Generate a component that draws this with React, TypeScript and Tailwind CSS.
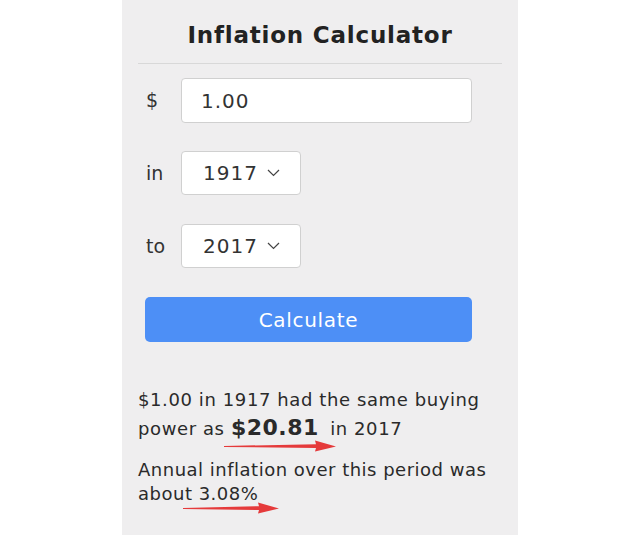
import React from 'react';

function Chevron() {
    return (
        <svg width="13" height="8" viewBox="0 0 13 8" className="ml-[9px]">
            <path d="M1 1 L6.5 6.5 L12 1" fill="none" stroke="#444" strokeWidth="1.2" />
        </svg>
    );
}

function YearSelect({ year }: { year: string }) {
    return (
        <div className="w-[120px] h-[44px] bg-white border border-[#d0d0d0] rounded-[4px] flex items-center pl-[21px] text-[20px] tracking-[1px] text-[#333]">
            {year}
            <Chevron />
        </div>
    );
}

function Arrow({ width, className }: { width: number; className: string }) {
    const s = width - 20;
    return (
        <svg width={width} height="14" viewBox={`0 0 ${width} 14`} className={className}>
            <path
                d={`M0 7 L${s} 5.2 L${s - 1} 1.5 L${width} 7.5 L${s - 1} 12.5 L${s} 9 L0 8 Z`}
                fill="#e53a3b"
            />
        </svg>
    );
}

export default function App() {
    return (
        <div className="w-[640px] h-[535px] bg-white overflow-hidden" style={{ fontFamily: '"DejaVu Sans", Verdana, sans-serif' }}>
            <div className="relative w-[396px] h-[535px] mx-auto bg-[#efeeef] px-4">
                <h1 className="pt-[20px] text-[23px] leading-[30px] tracking-[0.8px] font-bold text-center text-[#222]">
                    Inflation Calculator
                </h1>
                <div className="mt-[13px] h-px bg-[#d8d8d8]" />

                <div className="mt-[14px] flex items-center pl-2">
                    <span className="w-[35px] text-[19px] text-[#333]">$</span>
                    <div className="w-[291px] h-[45px] bg-white border border-[#d0d0d0] rounded-[4px] flex items-center pl-[19px] text-[20px] tracking-[1px] text-[#333]">
                        1.00
                    </div>
                </div>

                <div className="mt-[28px] flex items-center pl-2">
                    <span className="w-[35px] text-[19px] text-[#333]">in</span>
                    <YearSelect year="1917" />
                </div>

                <div className="mt-[29px] flex items-center pl-2">
                    <span className="w-[35px] text-[19px] text-[#333]">to</span>
                    <YearSelect year="2017" />
                </div>

                <button className="mt-[29px] ml-[7px] w-[327px] h-[45px] bg-[#4d8ff6] rounded-[5px] text-white text-[20px] tracking-[0.7px] flex items-center justify-center">
                    Calculate
                </button>

                <p className="mt-[44px] text-[18px] leading-[28px] tracking-[0.6px] text-[#2a2a2a]">
                    $1.00 in 1917 had the same buying power as{' '}
                    <b className="text-[22px] tracking-[0.5px] mr-[5px]">$20.81</b> in 2017
                </p>
                <p className="mt-[15px] text-[18px] leading-[24px] tracking-[0.5px] text-[#2a2a2a]">
                    Annual inflation over this period was about 3.08%
                </p>

                <Arrow width={112} className="absolute left-[102px] top-[439px]" />
                <Arrow width={96} className="absolute left-[61px] top-[501px]" />
            </div>
        </div>
    );
}
